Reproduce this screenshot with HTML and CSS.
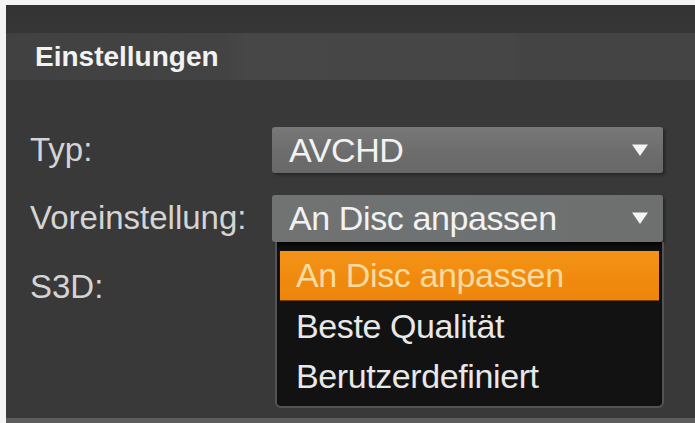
FILE: index.html
```html
<!DOCTYPE html>
<html lang="de">
<head>
<meta charset="utf-8">
<title>Einstellungen</title>
<link rel="stylesheet" href="styles.css">
</head>
<body>
<div class="panel">
  <div class="header"><h1 class="title">Einstellungen</h1></div>
  <div class="form">
    <div class="row">
      <div class="label">Typ:</div>
      <div class="select select-typ">
        <span class="value">AVCHD</span>
        <svg class="arrow" viewBox="0 0 18 14" width="18" height="14"><path d="M1 1.5 L17 1.5 L9 13 Z" fill="#f4f4f4"/></svg>
      </div>
    </div>
    <div class="row">
      <div class="label">Voreinstellung:</div>
      <div class="select select-preset">
        <span class="value">An Disc anpassen</span>
        <svg class="arrow" viewBox="0 0 18 14" width="18" height="14"><path d="M1 1.5 L17 1.5 L9 13 Z" fill="#f4f4f4"/></svg>
        <ul class="menu">
          <li class="item active">An Disc anpassen</li>
          <li class="item">Beste Qualität</li>
          <li class="item">Berutzerdefiniert</li>
        </ul>
      </div>
    </div>
    <div class="row row-s3d">
      <div class="label">S3D:</div>
    </div>
  </div>
</div>
</body>
</html>
```
FILE: styles.css
```css
html, body {
  margin: 0;
  padding: 0;
  background: #f4f4f4;
  width: 695px;
  height: 423px;
  overflow: hidden;
}
.panel {
  margin: 5px 0 0 6px;
  height: 413px;
  background: #393939;
  border-bottom: 5px solid #5c5c5c;
  font-family: "Liberation Sans", Arial, sans-serif;
  display: flex;
  flex-direction: column;
  background-image: linear-gradient(#333 0, #363636 28px, #393939 28px);
}
.header {
  margin-top: 28px;
  height: 47px;
  background: linear-gradient(90deg, #414141 0, #434343 220px, #474747 240px, #464646 510px, #444 515px, #444 100%);
  display: flex;
  align-items: center;
  padding-left: 29px;
}
.title {
  margin: 0;
  font-size: 28px;
  font-weight: bold;
  color: #f2f2f2;
}
.form {
  margin-top: 47px;
  display: flex;
  flex-direction: column;
  gap: 22px;
}
.row {
  display: flex;
  align-items: center;
  height: 46px;
}
.label {
  width: 266px;
  padding-left: 24px;
  box-sizing: border-box;
  font-size: 33px;
  color: #d4d4d4;
}
.select {
  position: relative;
  width: 391px;
  height: 46px;
  border-radius: 3px;
  display: flex;
  align-items: center;
  justify-content: space-between;
  padding: 0 14px 0 17px;
  box-sizing: border-box;
  box-shadow: 2px 2px 3px rgba(0,0,0,0.35);
}
.select-typ {
  background: linear-gradient(#787878, #6c6c6c 60%, #686868);
}
.select-preset {
  height: 47px;
  background: linear-gradient(90deg, #727272 0%, #6e7272 40%, #6e7070 100%);
}
.value {
  font-size: 34px;
  color: #f2f2f2;
  letter-spacing: -0.4px;
}
.arrow {
  display: block;
}
.menu {
  position: absolute;
  left: 3px;
  top: 47px;
  width: 389px;
  margin: 0;
  padding: 9px 3px 5px;
  box-sizing: border-box;
  list-style: none;
  background: #121212;
  border: 2px solid #545454;
  border-top: none;
  border-radius: 0 0 6px 6px;
  box-shadow: inset 0 6px 4px -2px #060606;
}
.item {
  height: 50px;
  line-height: 50px;
  padding-left: 16px;
  font-size: 34px;
  color: #e8e8e8;
  letter-spacing: -0.4px;
}
.item.active {
  height: 49px;
  line-height: 49px;
  background: linear-gradient(#f49418, #f08a0e 60%, #ee860c);
  color: #f7dba0;
  border-bottom: 1px solid #7a3e06;
}
.row-s3d .label {
  padding-top: 2px;
}
```
